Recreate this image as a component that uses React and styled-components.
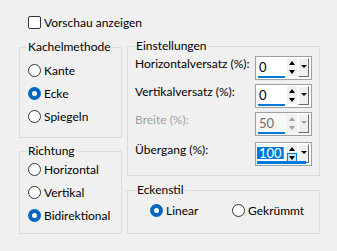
import React from 'react'
import styled, { createGlobalStyle } from 'styled-components'

const Global = createGlobalStyle`
  html, body { margin: 0; padding: 0; background: #f0f0f0; }
  body { font-family: Lato, "Noto Sans", sans-serif; font-size: 12px; color: #000; }
`

const Page = styled.div`
  width: 337px;
  height: 251px;
  box-sizing: border-box;
  padding: 16px 17px 0 19px;
`

const CheckRow = styled.div`
  display: flex;
  align-items: center;
  gap: 3px;
  margin-left: 9px;
  height: 13px;
`

const CheckBox = styled.span`
  width: 11px;
  height: 11px;
  border: 1px solid #333;
  border-radius: 2px;
  background: #fff;
`

const Columns = styled.div`
  display: grid;
  grid-template-columns: 103px 193px;
  column-gap: 5px;
  margin-top: 17px;
`

const Column = styled.div`
  display: flex;
  flex-direction: column;
  gap: ${p => p.$gap}px;
  padding-top: ${p => p.$top || 0}px;
`

const Group = styled.div`
  box-sizing: border-box;
  height: ${p => p.$h}px;
  border: 1px solid #dcdcdc;
  padding: ${p => p.$pad};
  display: flex;
  flex-direction: ${p => p.$row ? 'row' : 'column'};
  flex-wrap: ${p => p.$row ? 'wrap' : 'nowrap'};
  align-content: flex-start;
`

const Legend = styled.span`
  flex-basis: ${p => p.$row ? '100%' : 'auto'};
  align-self: flex-start;
  margin: -8px 0 0 ${p => p.$ml}px;
  padding: 0 1px;
  line-height: 14px;
  height: 14px;
  background: #f0f0f0;
  ${p => p.$row && 'max-width: fit-content;'}
`

const Options = styled.div`
  display: flex;
  flex-direction: ${p => p.$row ? 'row' : 'column'};
  margin-top: ${p => p.$mt}px;
  width: 100%;
`

const Option = styled.div`
  display: flex;
  align-items: center;
  gap: 3px;
  height: 23px;
  width: ${p => p.$w ? p.$w + 'px' : 'auto'};
`

const Radio = styled.span`
  box-sizing: border-box;
  width: 13px;
  height: 13px;
  border-radius: 50%;
  border: ${p => p.$on ? '0' : '1px solid #333'};
  background: ${p => p.$on ? '#0067c0' : '#fff'};
  display: flex;
  align-items: center;
  justify-content: center;
  &::after {
    content: '';
    display: ${p => p.$on ? 'block' : 'none'};
    width: 5px;
    height: 5px;
    border-radius: 50%;
    background: #fff;
  }
`

const Field = styled.div`
  display: flex;
  justify-content: space-between;
  height: 24px;
  margin-top: ${p => p.$mt}px;
`

const FieldLabel = styled.span`
  line-height: 16px;
  color: ${p => p.$off ? '#a0a0a0' : '#000'};
`

const Spin = styled.div`
  width: 57px;
  height: 24px;
  box-sizing: border-box;
  border: 1px solid #a0a0a0;
  background: ${p => p.$off ? '#f7f7f7' : '#fff'};
  display: flex;
  padding: 1px 0 0 1px;
  position: relative;
`

const Entry = styled.div`
  width: 28px;
  height: 20px;
  display: flex;
  flex-direction: column;
  justify-content: flex-end;
`

const Value = styled.span`
  font-size: 13px;
  line-height: 12px;
  height: 12px;
  align-self: flex-start;
  padding: 0 1px 0 2px;
  margin-bottom: ${p => p.$sel ? 5 : 3}px;
  color: ${p => p.$off ? '#6d6d6d' : p.$sel ? '#fff' : '#000'};
  background: ${p => p.$sel ? '#0078d7' : 'transparent'};
  border-right: ${p => p.$sel ? '1px solid #e8711c' : '0'};
`

const Underline = styled.div`
  height: 2px;
  width: 27px;
  margin-left: 1px;
  background: #0078d7;
`

const FullLine = styled.div`
  position: absolute;
  left: 1px;
  right: 5px;
  bottom: 1px;
  height: 3px;
  background: #0078d7;
`

const Arrows = styled.div`
  width: 10px;
  height: 18px;
  margin-left: 2px;
  display: flex;
  flex-direction: column;
`

const Arrow = styled.div`
  flex: 1;
  display: flex;
  align-items: center;
  justify-content: center;
  box-sizing: border-box;
  background: ${p => p.$hot ? '#cce4f7' : '#f0f0f0'};
  border: 1px solid ${p => p.$hot ? '#0078d7' : '#f0f0f0'};
  &::after {
    content: '';
    border-left: 3px solid transparent;
    border-right: 3px solid transparent;
    ${p => p.$down ? 'border-top' : 'border-bottom'}: 4px solid ${p => p.$off ? '#a0a0a0' : '#000'};
  }
`

const Drop = styled.div`
  width: 11px;
  height: 19px;
  margin-left: 1px;
  box-sizing: border-box;
  background: #f0f0f0;
  border-top: 1px solid #fff;
  border-left: 1px solid #fff;
  border-right: 1px solid #696969;
  border-bottom: 1px solid #696969;
  display: flex;
  align-items: flex-start;
  justify-content: center;
  padding-top: 6px;
  &::after {
    content: '';
    border-left: 3px solid transparent;
    border-right: 3px solid transparent;
    border-top: 3px solid ${p => p.$off ? '#a0a0a0' : '#000'};
  }
`

function SpinBox({ value, off, sel }) {
  return (
    <Spin $off={off}>
      <Entry>
        <Value $off={off} $sel={sel}>{value}</Value>
        {!sel && <Underline />}
      </Entry>
      <Arrows>
        <Arrow $off={off} />
        <Arrow $off={off} $down $hot={sel} />
      </Arrows>
      <Drop $off={off} />
      {sel && <FullLine />}
    </Spin>
  )
}

export default function App() {
  return (
    <Page>
      <Global />
      <CheckRow><CheckBox />Vorschau anzeigen</CheckRow>
      <Columns>
        <Column $gap={13} $top={1}>
          <Group $h={91} $pad="0 0 0 8px">
            <Legend $ml={-1}>Kachelmethode</Legend>
            <Options $mt={5}>
              <Option><Radio />Kante</Option>
              <Option><Radio $on />Ecke</Option>
              <Option><Radio />Spiegeln</Option>
            </Options>
          </Group>
          <Group $h={83} $pad="0 0 0 8px">
            <Legend $ml={-1}>Richtung</Legend>
            <Options $mt={0}>
              <Option><Radio />Horizontal</Option>
              <Option><Radio />Vertikal</Option>
              <Option><Radio $on />Bidirektional</Option>
            </Options>
          </Group>
        </Column>
        <Column $gap={14}>
          <Group $h={130} $pad="0 7px 0 7px">
            <Legend $ml={0}>Einstellungen</Legend>
            <Field $mt={3}><FieldLabel>Horizontalversatz (%):</FieldLabel><SpinBox value="0" /></Field>
            <Field $mt={4}><FieldLabel>Vertikalversatz (%):</FieldLabel><SpinBox value="0" /></Field>
            <Field $mt={4}><FieldLabel $off>Breite (%):</FieldLabel><SpinBox value="50" off /></Field>
            <Field $mt={6}><FieldLabel>Übergang (%):</FieldLabel><SpinBox value="100" sel /></Field>
          </Group>
          <Group $h={44} $pad="0 0 0 22px">
            <Legend $ml={-14}>Eckenstil</Legend>
            <Options $row $mt={2}>
              <Option $w={82}><Radio $on />Linear</Option>
              <Option><Radio />Gekrümmt</Option>
            </Options>
          </Group>
        </Column>
      </Columns>
    </Page>
  )
}
